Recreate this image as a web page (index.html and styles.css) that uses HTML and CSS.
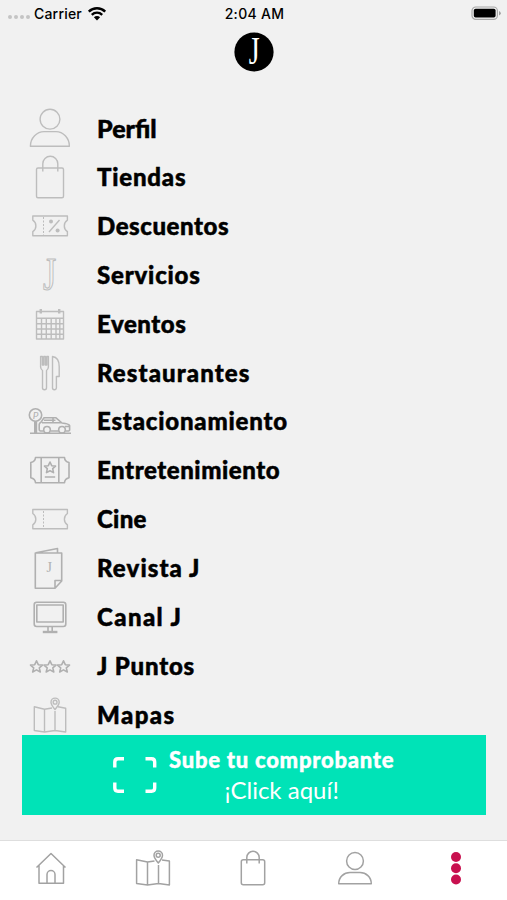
FILE: index.html
```
<!DOCTYPE html>
<html lang="es">

<head>
    <meta charset="UTF-8">
    <title>Menú</title>
    <link rel="stylesheet" href="styles.css">
</head>

<body>
    <div class="app">
        <header class="status">
            <div class="status__left">
                <span class="signal"><i></i><i></i><i></i><i></i></span>
                <span class="status__carrier">Carrier</span>
                <svg class="wifi" viewBox="0 0 20 15">
                    <path d="M1.8 5.6a11.6 11.6 0 0 1 16.4 0M4.8 8.8a7.4 7.4 0 0 1 10.4 0" />
                    <path class="solid" d="M6.9 11.2a4.4 4.4 0 0 1 6.2 0L10 14.4z" />
                </svg>
            </div>
            <span class="status__time">2:04 AM</span>
            <div class="status__right">
                <svg class="battery" viewBox="0 0 30 15">
                    <rect class="battery__case" x="1" y="1" width="25.4" height="12.4" rx="3.8" />
                    <rect x="2.8" y="2.8" width="21.8" height="8.8" rx="1.8" />
                    <path class="battery__tip" d="M28 5v4.4q1.8-.8 1.8-2.2T28 5z" />
                </svg>
            </div>
        </header>

        <div class="brand">
            <svg class="brand__logo" viewBox="0 0 40 40">
                <circle cx="20" cy="20" r="19.6" />
                <text transform="translate(14.8 31.5) scale(.72 1)">J</text>
            </svg>
        </div>

        <ul class="menu">
            <li class="menu__item">
                <svg class="icon" viewBox="0 0 48 48">
                    <circle cx="24" cy="15.2" r="9.9" />
                    <path d="M4.4 42.2C4.4 34 11 27.6 18 27.6H30C37 27.6 43.4 34 43.4 42.2z" />
                </svg>
                <span>Perfil</span>
            </li>
            <li class="menu__item">
                <svg class="icon" viewBox="0 0 48 48">
                    <rect x="10.5" y="15" width="27" height="29.7" rx="1.5" />
                    <path d="M16.8 18.5V10.8a7.5 7.5 0 0 1 15 0V18.5" />
                </svg>
                <span>Tiendas</span>
            </li>
            <li class="menu__item">
                <svg class="icon" viewBox="0 0 48 48">
                    <path d="M6.8 14H41.4V18.2A6.8 6.8 0 0 0 41.4 29.6V33.7H6.8V29.6A6.8 6.8 0 0 0 6.8 18.2z" />
                    <path class="dash" d="M17.5 15V33.5" />
                    <path d="M33.5 18L23 30" />
                    <circle class="dot" cx="25" cy="19.5" r="2" />
                    <circle class="dot" cx="31.6" cy="28.5" r="2" />
                </svg>
                <span>Descuentos</span>
            </li>
            <li class="menu__item">
                <svg class="icon" viewBox="0 0 48 48">
                    <text class="jota" transform="translate(17 38.9) scale(.74 1)">J</text>
                </svg>
                <span>Servicios</span>
            </li>
            <li class="menu__item">
                <svg class="icon" viewBox="0 0 48 48">
                    <path d="M10.5 11.5H37.5V39H10.5zM10.5 18.3H37.5M10.5 23.7H37.5M10.5 29H37.5M10.5 34.2H37.5M15.5 18.3V39M20.3 18.3V39M25.2 18.3V39M30 18.3V39M33.8 18.3V39" />
                    <path class="thick" d="M14.8 9V13.5M33.2 9V13.5" />
                </svg>
                <span>Eventos</span>
            </li>
            <li class="menu__item">
                <svg class="icon" viewBox="0 0 48 48">
                    <path d="M14.600 7.500V18Q14.800 20.500 16.500 21.500V38.800Q16.500 40.700 18.500 40.700T20.500 38.800V21.500Q22.200 20.500 22.400 18V7.500H20.800V16H19.400V7.500H17.800V16H16.400V7.500z" />
                    <path d="M26.500 7.500V38.800Q26.500 40.700 28.400 40.700T30.400 38.800V27.500H33.200V17.500Q33.200 8.500 26.500 7.500z" />
                </svg>
                <span>Restaurantes</span>
            </li>
            <li class="menu__item">
                <svg class="icon icon--dark" viewBox="0 0 48 48">
                    <circle cx="9.5" cy="18" r="6.2" />
                    <text class="park" x="6.800" y="21.600">P</text>
                    <path d="M8.800 24.200V36M10.400 24.200V36M4 36.200H45" />
                    <path d="M17.400 34H14.500Q13.200 34 13.200 32V27.500Q13.200 26 15 25.200L18 20.800H30L36 26Q43 26.800 43.600 28.500V33Q43.600 34 41.500 34H39.600M32.600 34H24.600M16 25.800H36M18 23.200H29.500M27 21V25.500M39 29.500H43" />
                    <circle cx="21" cy="32.800" r="3.300" />
                    <circle cx="36" cy="32.800" r="3.300" />
                </svg>
                <span>Estacionamiento</span>
            </li>
            <li class="menu__item">
                <svg class="icon icon--dark" viewBox="0 0 48 48">
                    <path d="M9.500 11.500H38.500Q38.700 15.400 43 16.500V31.800Q38.700 33 38.500 36.800H9.500Q9.300 33 4.800 31.800V16.500Q9.300 15.400 9.500 11.500zM15.200 11.500V36.800M32.800 11.500V36.800M18.800 31H29.200" />
                    <path d="M24 16L25.700 19.700 29.500 20.100 26.700 22.700 27.500 26.600 24 24.700 20.500 26.600 21.300 22.700 18.500 20.100 22.300 19.700z" />
                </svg>
                <span>Entretenimiento</span>
            </li>
            <li class="menu__item">
                <svg class="icon" viewBox="0 0 48 48">
                    <path d="M6.800 14.500H41.400V18.500A6.800 6.800 0 0 0 41.400 29.800V33.800H6.800V29.800A6.800 6.800 0 0 0 6.800 18.500z" />
                    <path class="dash" d="M17.500 16V33" />
                </svg>
                <span>Cine</span>
            </li>
            <li class="menu__item">
                <svg class="icon icon--dark" viewBox="0 0 48 48">
                    <path d="M9.300 9H35.700V37L29 44.200H9.300zM29 44.200V36.500H35.700M10 8.800L31.500 4.500V9" />
                    <text class="cover" x="20.500" y="28">J</text>
                </svg>
                <span>Revista J</span>
            </li>
            <li class="menu__item">
                <svg class="icon icon--dark" viewBox="0 0 48 48">
                    <rect x="8.200" y="9.200" width="31.600" height="24.300" rx="2.500" />
                    <rect x="10.800" y="12" width="26.400" height="17" />
                    <path d="M22 33.500V38.500M26.200 33.500V38.500" />
                    <path class="thick" d="M16.800 39H31.400" />
                </svg>
                <span>Canal J</span>
            </li>
            <li class="menu__item">
                <svg class="icon icon--dark" viewBox="0 0 48 48">
                    <path d="M10.500 18.800L12.300 22.700 16.500 23.100 13.300 25.900 14.300 30 10.500 27.900 6.700 30 7.700 25.900 4.500 23.100 8.700 22.700z" />
                    <path d="M24 18.800L25.800 22.700 30 23.100 26.800 25.900 27.800 30 24 27.900 20.200 30 21.200 25.900 18 23.100 22.200 22.700z" />
                    <path d="M37.500 18.800L39.300 22.700 43.500 23.100 40.300 25.900 41.300 30 37.500 27.900 33.700 30 34.700 25.900 31.500 23.100 35.700 22.700z" />
                </svg>
                <span>J Puntos</span>
            </li>
            <li class="menu__item">
                <svg class="icon" viewBox="0 0 48 48">
                    <path d="M26 17L18.500 18.200 8.300 15.800V39.500L18.500 41 29 39.500 39.700 41V17.200L32 15.800M18.500 18.200V41M29 20V39.500" />
                    <path d="M29 18.500Q25 13.500 25 11.200A4.100 4.100 0 0 1 33.200 11.200Q33.200 13.500 29 18.500z" />
                    <circle cx="29.100" cy="11.200" r="1.900" />
                </svg>
                <span>Mapas</span>
            </li>
        </ul>

        <div class="upload">
            <svg class="upload__frame" viewBox="0 0 44 36">
                <path d="M1.800 10.500V5Q1.800 1.800 5 1.800H11M32.500 1.800H38.500Q41.700 1.800 41.700 5V10.500M41.700 25.500V31Q41.700 34.200 38.500 34.200H32.500M11 34.200H5Q1.800 34.200 1.800 31V25.500" />
            </svg>
            <div class="upload__text">
                <strong>Sube tu comprobante</strong>
                <span>¡Click aquí!</span>
            </div>
        </div>

        <nav class="tabs">
            <a class="tabs__item">
                <svg class="tab-icon" viewBox="0 0 40 40">
                    <path d="M5.500 18.500L20 4.500 34.500 18.500M8 16.500V34.200H32.500V16.500M16 34V25.500a4 4 0 0 1 8 0V34" />
                </svg>
            </a>
            <a class="tabs__item">
                <svg class="tab-icon" viewBox="0 0 40 40">
                    <path d="M22.500 12L15.500 13 4.600 10.800V34.600L15.500 36 26.500 34.600 37.400 36V12L30 11M15.500 13V36M26.500 16V34.600" />
                    <path d="M26.300 14Q22 9 22 6.200A4.200 4.200 0 0 1 30.500 6.200Q30.500 9 26.300 14z" />
                    <circle cx="26.200" cy="6.200" r="2" />
                </svg>
            </a>
            <a class="tabs__item">
                <svg class="tab-icon" viewBox="0 0 40 40">
                    <rect x="8.300" y="10.800" width="23.400" height="25" rx="2" />
                    <path d="M13.800 14.500V8.500a6.200 6.200 0 0 1 12.400 0V14.500" />
                </svg>
            </a>
            <a class="tabs__item">
                <svg class="tab-icon" viewBox="0 0 40 40">
                    <circle cx="20" cy="12" r="8.400" />
                    <path d="M3.700 34.800C3.700 28 9 23.600 15 23.600H25C31 23.600 36.300 28 36.300 34.800z" />
                </svg>
            </a>
            <a class="tabs__item">
                <svg class="tab-icon tab-icon--active" viewBox="0 0 40 40">
                    <circle cx="20" cy="8" r="5" />
                    <circle cx="20" cy="19.200" r="5" />
                    <circle cx="20" cy="30.500" r="5" />
                </svg>
            </a>
        </nav>
    </div>
</body>

</html>
```
FILE: styles.css
```
* {
    box-sizing: border-box;
}

body {
    margin: 0;
    background-color: #f1f1f1;
    font-family: "Lato", sans-serif;
    color: #000000;
}

.app {
    display: flex;
    flex-direction: column;
    height: 900px;
    overflow: hidden;
}

svg {
    display: block;
    fill: none;
    overflow: visible;
}

/* Barra de estado */
.status {
    display: grid;
    grid-template-columns: 1fr auto 1fr;
    align-items: center;
    height: 26px;
    padding: 0 6px 0 8px;
    font-family: "Inter", sans-serif;
    font-size: 14px;
    font-weight: 500;
}

.status__left {
    display: flex;
    align-items: center;
    gap: 5px;
}

.status__carrier {
    margin-left: -1px;
    letter-spacing: 0.2px;
}

.status__time {
    letter-spacing: 0.3px;
}

.signal {
    display: flex;
    gap: 2px;
    padding-top: 8px;
}

.signal i {
    width: 4px;
    height: 4px;
    border-radius: 50%;
    background-color: #c4c4c4;
}

.wifi {
    width: 20px;
    height: 15px;
    stroke: #000000;
    stroke-width: 2.4;
}

.wifi .solid {
    fill: #000000;
    stroke: none;
}

.status__right {
    display: flex;
    justify-content: flex-end;
}

.battery {
    width: 30px;
    height: 15px;
    fill: #000000;
}

.battery__case {
    fill: none;
    stroke: #a8a8a8;
    stroke-width: 1.2;
}

.battery__tip {
    fill: #a0a0a0;
}

/* Logo */
.brand {
    display: flex;
    justify-content: center;
    height: 78px;
    padding-top: 6px;
}

.brand__logo {
    width: 40px;
    height: 40px;
    fill: #000000;
}

.brand__logo text {
    fill: #ffffff;
    font-family: "Liberation Serif", serif;
    font-size: 39px;
}

/* Lista del menú */
.menu {
    height: 631px;
    margin: 0;
    padding: 0 26px;
    list-style: none;
}

.menu__item {
    display: flex;
    align-items: center;
    gap: 23px;
    height: 48.85px;
    font-size: 24px;
    font-weight: 900;
    letter-spacing: 0.8px;
    -webkit-text-stroke: 0.5px #000000;
}

.menu__item span {
    margin-top: -1px;
}

/* Ajuste del ancho de cada texto */
.menu__item:nth-child(1) {
    font-size: 25px;
    letter-spacing: 0;
}

.menu__item:nth-child(3),
.menu__item:nth-child(5),
.menu__item:nth-child(8) {
    letter-spacing: 0.55px;
}

.menu__item:nth-child(6),
.menu__item:nth-child(10) {
    letter-spacing: 1.1px;
}

.menu__item:nth-child(9) {
    letter-spacing: 0.3px;
}

.menu__item:nth-child(11),
.menu__item:nth-child(13) {
    letter-spacing: 1.4px;
}

.icon {
    flex: none;
    width: 48px;
    height: 48px;
    stroke: #bdbdbd;
    stroke-width: 1.4;
    stroke-linejoin: round;
}

.icon--dark {
    stroke: #b0b0b0;
    stroke-width: 1.6;
}

.icon .dash {
    stroke-dasharray: 2 1.5;
    stroke-width: 1;
}

.icon .dot {
    fill: #bdbdbd;
    stroke: none;
}

.icon .thick {
    stroke-width: 2.4;
}

.icon text {
    font-family: "Liberation Serif", serif;
    font-weight: 400;
    letter-spacing: 0;
    -webkit-text-stroke: 0;
}

.icon .jota {
    font-size: 46px;
    fill: #f1f1f1;
    stroke: #bdbdbd;
    stroke-width: 1.2;
    -webkit-text-stroke: 1.2px #bdbdbd;
}

.icon .park {
    font-family: "Lato", sans-serif;
    font-size: 10px;
    font-style: italic;
    fill: #b0b0b0;
    stroke: none;
}

.icon .cover {
    font-size: 14px;
    fill: #b0b0b0;
    stroke: none;
}

/* Botón para subir comprobante */
.upload {
    display: flex;
    align-items: center;
    gap: 12px;
    height: 80px;
    margin: 0 21px 25px 22px;
    padding-left: 91px;
    background-color: #00e3b7;
    color: #ffffff;
}

.upload__frame {
    width: 44px;
    height: 36px;
    stroke: #ffffff;
    stroke-width: 3.4;
}

.upload__text {
    display: flex;
    flex-direction: column;
    align-items: center;
    font-size: 24px;
    line-height: 30px;
}

.upload__text strong {
    font-size: 22px;
    font-weight: 900;
    letter-spacing: 0.75px;
    -webkit-text-stroke: 0.4px #ffffff;
}

/* Barra inferior */
.tabs {
    display: grid;
    grid-template-columns: repeat(5, 1fr);
    height: 60px;
    padding-top: 8px;
    border-top: 1px solid #dedede;
    background-color: #ffffff;
}

.tabs__item {
    display: flex;
    justify-content: center;
}

.tab-icon {
    width: 40px;
    height: 40px;
    stroke: #a2a2a2;
    stroke-width: 1.5;
    stroke-linejoin: round;
}

.tab-icon--active {
    fill: #c8104f;
    stroke: none;
}
```
